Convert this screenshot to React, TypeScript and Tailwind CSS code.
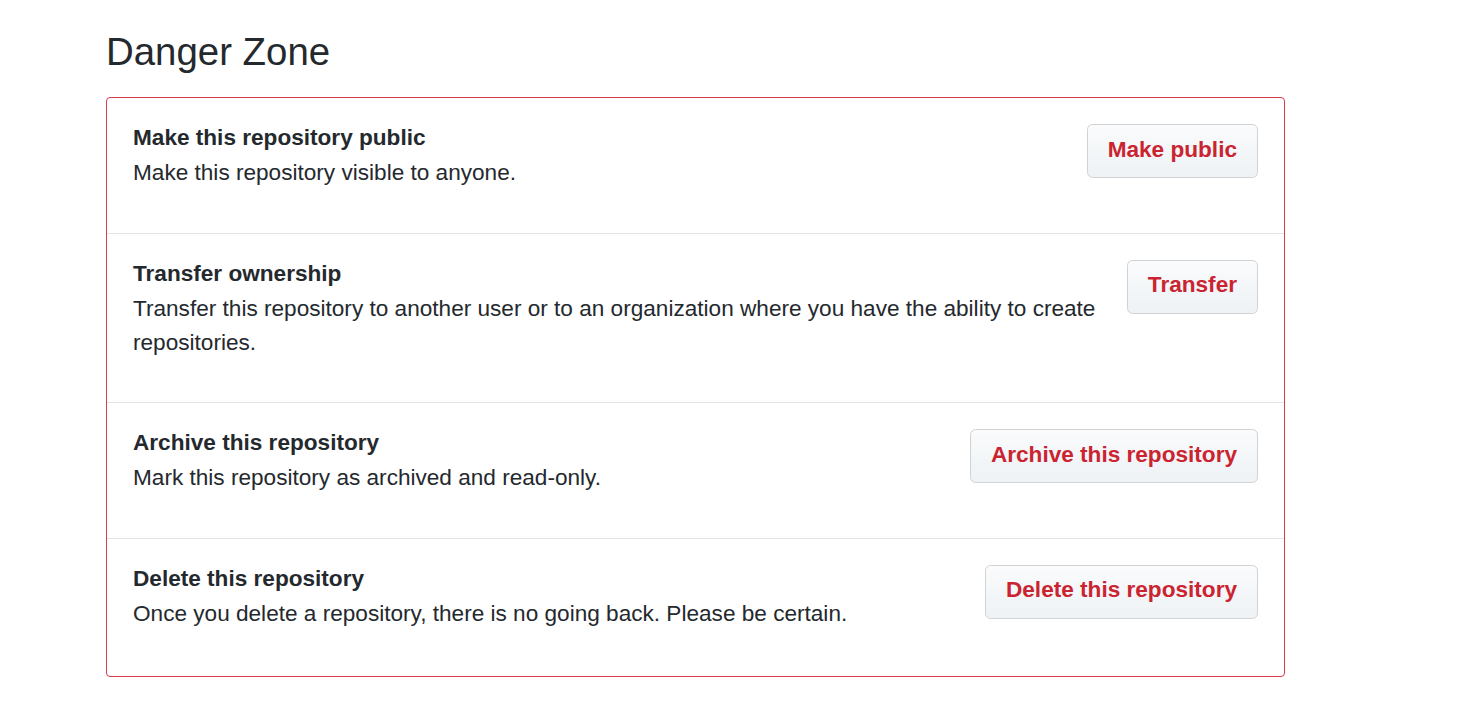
const ROWS = [
  {
    title: "Make this repository public",
    desc: "Make this repository visible to anyone.",
    action: "Make public",
  },
  {
    title: "Transfer ownership",
    desc: "Transfer this repository to another user or to an organization where you have the ability to create repositories.",
    action: "Transfer",
  },
  {
    title: "Archive this repository",
    desc: "Mark this repository as archived and read-only.",
    action: "Archive this repository",
  },
  {
    title: "Delete this repository",
    desc: "Once you delete a repository, there is no going back. Please be certain.",
    action: "Delete this repository",
  },
];

export default function App() {
  return (
    <div
      className="min-h-screen bg-white text-[#24292e] pl-[106px] pt-[28px]"
      style={{ fontFamily: '"Liberation Sans", Arial, sans-serif' }}
    >
      <h2 className="text-[38.4px] leading-[48px] font-normal mb-[21px]">Danger Zone</h2>

      <div className="w-[1179px] border border-[#d73a49] rounded-[4px]">
        {ROWS.map((row, i) => (
          <div
            key={row.title}
            className={
              "flex items-start gap-[16px] px-[26px] pt-[26px]" +
              (i > 0 ? " border-t border-[#e1e4e8]" : "") +
              (i === ROWS.length - 1 ? " pb-[29px]" : " pb-[26.5px]")
            }
          >
            <div className="flex-1 min-w-0">
              <h4 className="text-[22.6px] leading-[28px] font-bold mb-[4px]">{row.title}</h4>
              <p className="text-[22.6px] leading-[34px] mb-[16px]">{row.desc}</p>
            </div>
            {/* btn-danger */}
            <button className="shrink-0 h-[54px] px-[20px] pb-[3px] border border-[#d1d2d4] rounded-[5.6px] bg-linear-to-b from-[#fafbfc] to-[#eff3f6] to-90% text-[#cb2431] text-[22.6px] leading-[32px] font-bold whitespace-nowrap">
              {row.action}
            </button>
          </div>
        ))}
      </div>
    </div>
  );
}
